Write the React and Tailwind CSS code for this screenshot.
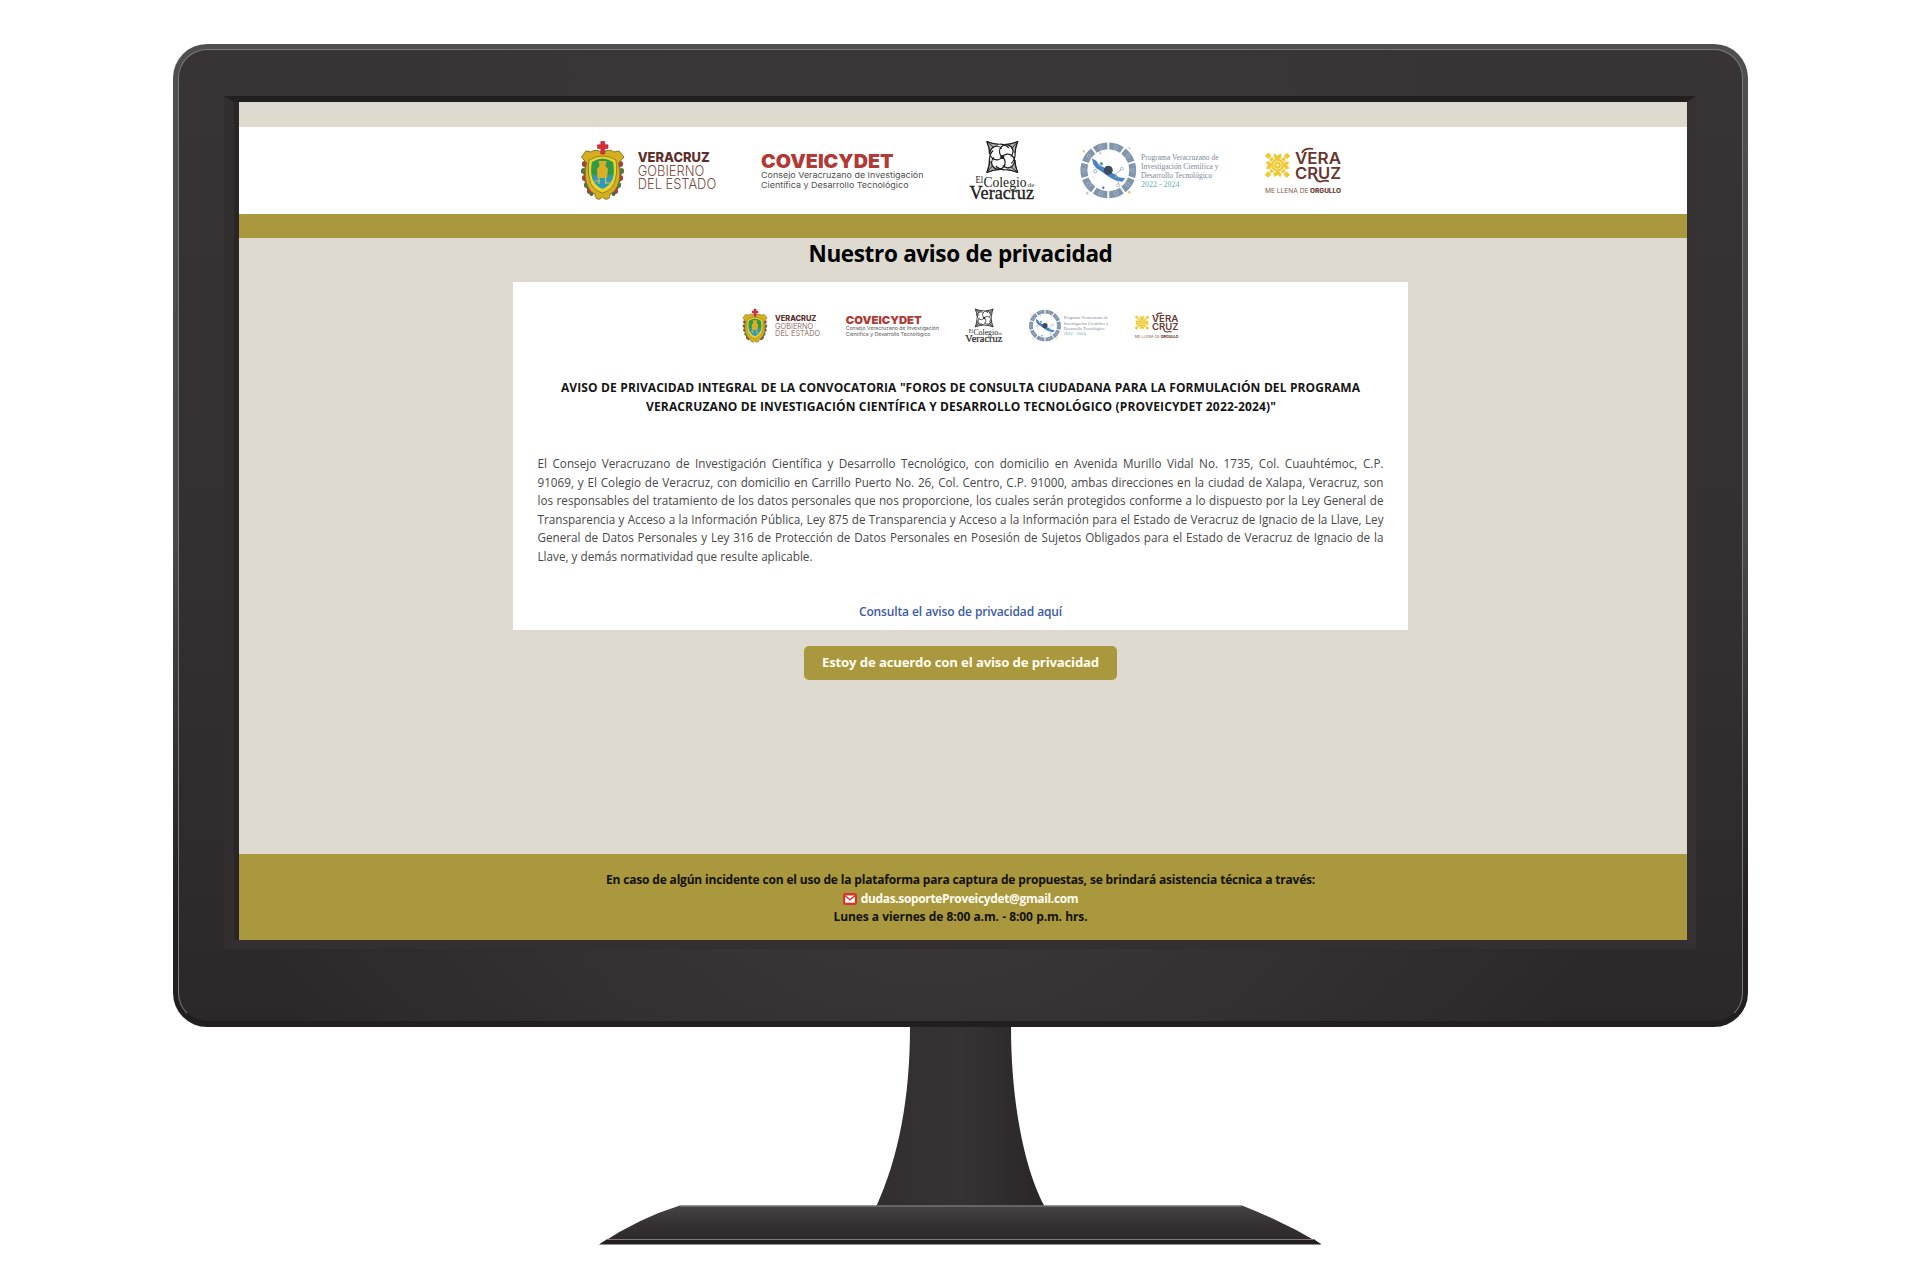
import React from "react";

const SANS = "'Open Sans', 'Noto Sans', sans-serif";
const MONT = "Inter, 'Open Sans', sans-serif";
const SERIF = "'Liberation Serif', serif";

function T({ x, y, w, size, fill, weight = 400, family = MONT, children }) {
  return (
    <text x={x} y={y} textLength={w} lengthAdjust="spacingAndGlyphs" fontSize={size} fill={fill} fontWeight={weight} fontFamily={family}>
      {children}
    </text>
  );
}

function Crest() {
  return (
    <g>
      {[[3, 24], [2, 31], [3, 38], [5, 45], [8, 51]].map(([x, y], i) => (
        <g key={i}>
          <ellipse cx={x + 1.5} cy={y} rx="2.6" ry="3" fill={i % 2 ? "#4d7a45" : "#a8403f"} />
          <ellipse cx={x + 3.5} cy={y + 3} rx="2" ry="2" fill="#3f6b44" />
          <ellipse cx={43.5 - x} cy={y} rx="2.6" ry="3" fill={i % 2 ? "#4d7a45" : "#a8403f"} />
          <ellipse cx={41.5 - x} cy={y + 3} rx="2" ry="2" fill="#3f6b44" />
        </g>
      ))}
      <path
        d="M1.5 17 L6 11 L11 12 Q16 8 22.5 13 Q29 8 34 12 L39 11 L44 17 L38.500 23 Q42 37 37 47 Q34 53 30 54 Q30 60 25 59 L22.500 57 L20 59 Q15 60 15 54 Q11 53 8 47 Q3 37 6.500 23 Z"
        fill="#d5ae22" stroke="#8b741c" strokeWidth="1"
      />
      <path d="M9 20 Q22.500 12 36 20 Q38 34 34 44 Q30 51 22.500 53 Q15 51 11 44 Q7 34 9 20Z" fill="#ecd22e" stroke="#7f731d" strokeWidth=".8" />
      <path d="M12 22 Q22.500 15 33 22 Q35 31 32.500 39 H12.500 Q10 31 12 22Z" fill="#2f9a48" />
      <path d="M11.800 35 H33.200 Q32 45 22.500 49 Q13 45 11.800 35Z" fill="#2b9bbd" />
      <path d="M18.500 21 H26.500 L25.500 26 L28 29 L27 38 H17.500 L17 29 L19.500 26Z" fill="#dcae25" />
      <path d="M19 38 V44 M25.500 38 V44 M15 41 H20 M25 43 H30" stroke="#d9c046" strokeWidth="1.200" />
      <path d="M20.800 1.500 H24.800 V4.800 H28 V8.500 H24.800 V14 H20.800 V8.500 H17.500 V4.800 H20.800Z" fill="#dc2b3b" stroke="#a32333" strokeWidth=".6" />
    </g>
  );
}

function ColegioEmblem() {
  return (
    <g transform="translate(422.300 17)" fill="none" stroke="#1d1d1d" strokeWidth="1.200">
      {[0, 90, 180, 270].map((a) => (
        <g key={a} transform={`rotate(${a})`}>
          <path d="M0 0 A6.800 6.800 0 1 1 -0.500 -8.500" />
          <path d="M-15.500 -15.500 Q-9 -12.500 -1.500 -12.800 Q4 -12 6.500 -9" />
          <path d="M-15.500 -15.500 Q-12.500 -9 -12.800 -3" />
          <path d="M-15.500 -15.500 L-4 -12.200 L-9.500 -9.500 L-12.300 -5Z" fill="#1d1d1d" fillOpacity=".35" strokeWidth=".5" />
          <path d="M-15.500 -15.500 L-8.500 -9.500" strokeWidth=".9" />
        </g>
      ))}
      <circle r="1.500" fill="#1d1d1d" />
    </g>
  );
}

function Gear() {
  return (
    <g transform="translate(528.300 30.300)">
      {[18, 54, 90, 126, 162, 198, 234, 270, 306, 342].map((a) => (
        <g key={a} transform={`rotate(${a})`}>
          <path d="M-7.600 -26.800 Q0 -29 7.600 -26.800 L5.700 -20.200 Q0 -21.800 -5.700 -20.200Z" fill="#8195ad" />
          <circle cx="0" cy="-24.200" r="1.800" fill="none" stroke="#a9b8c9" strokeWidth=".8" />
        </g>
      ))}
      <path d="M-16.500 -12 L-12 -9.500 L-9 -5 L-4.500 -3 L1 2 L7 4 L10 7 L17 8 L14 11.500 L8 10.500 L2 7.500 L-3 4 L-8 .500 L-12 -2 L-15 -6Z" fill="#4c82c3" />
      <path d="M7 4 L13 -1 M-13 -1 V2 M10 8 V14" stroke="#8fa0b3" strokeWidth=".7" />
      <circle cx="13.500" cy="-1.500" r="1.500" fill="#fff" stroke="#8fa0b3" strokeWidth=".7" />
      <circle cx="-13" cy="1" r="1.600" fill="#fff" stroke="#7b93bd" strokeWidth=".7" />
      <circle cx="10" cy="15" r="1.500" fill="#fff" stroke="#8fa0b3" strokeWidth=".7" />
      <circle cx="-7" cy="-6.500" r="1.800" fill="#55a997" />
      <circle cx="7.500" cy="6.500" r="1.600" fill="#55a997" />
      <circle cx="0" cy="0" r="4.500" fill="#3b4a5c" />
      <circle cx="-24.500" cy="-19" r="1.200" fill="#efc75a" />
      <circle cx="21" cy="22" r="1.400" fill="#efc75a" />
      <circle cx="21" cy="-22" r="1" fill="#b7c8dd" />
      <circle cx="-21" cy="23" r="1.300" fill="#b7c8dd" />
      <circle cx="-5" cy="17.500" r="1.200" fill="#6b67dc" />
      <circle cx="-8" cy="-17" r="1" fill="#9db9df" />
      <circle cx="-15" cy="7" r=".800" fill="#e6cf91" />
    </g>
  );
}

function Sun() {
  return (
    <g transform="translate(697.500 25.200)">
      {[0, 90, 180, 270].map((a) => (
        <g key={a} transform={`rotate(${a})`} fill="#efc832">
          <path d="M-12.500 -9.500 L-9.300 -12.800 L-6 -9.500 L-9.300 -6.200Z" />
          <path d="M-3.200 -12 L0 -9.500 L3.200 -12 L4 -8 L0 -5.500 L-4 -8Z" />
          <path d="M-8 -8 L-3 -7 L-7 -3Z" />
        </g>
      ))}
      <circle r="6.600" fill="#efc832" />
      <circle r="4" fill="none" stroke="#fbedb0" strokeWidth="1" />
      <circle r="1.300" fill="#fbedb0" />
    </g>
  );
}

function LogoStrip({ className }) {
  const brown = "#67372f";
  return (
    <svg viewBox="0 0 762 62" className={className}>
      <Crest />
      <T x={57.700} y={22} w={72} size={13.500} weight={800} fill="#5d2f2a">VERACRUZ</T>
      <T x={57.700} y={35.800} w={66.500} size={14} weight={300} fill="#7a4b43">GOBIERNO</T>
      <T x={57.700} y={49} w={78.500} size={14} weight={300} fill="#7a4b43">DEL ESTADO</T>
      <T x={181} y={27.700} w={132.500} size={19} weight={900} fill="#b03a35">COVEICYDET</T>
      <T x={181} y={38} w={162.500} size={8.200} fill="#505050">Consejo Veracruzano de Investigación</T>
      <T x={181} y={47.700} w={147.500} size={8.200} fill="#505050">Científica y Desarrollo Tecnológico</T>
      <ColegioEmblem />
      <T x={395.500} y={43} w={7.500} size={10} family={SERIF} fill="#222">El</T>
      <T x={403.500} y={46.800} w={43} size={14} family={SERIF} fill="#222">Colegio</T>
      <T x={447.500} y={46.500} w={7} size={6} family={SERIF} fill="#444">de</T>
      <g stroke="#222" strokeWidth=".35">
        <T x={389.500} y={59.200} w={64.500} size={18} family={SERIF} fill="#222">Veracruz</T>
      </g>
      <Gear />
      <T x={561} y={19.500} w={77.500} size={7.600} family={SERIF} fill="#7e8797">Programa Veracruzano de</T>
      <T x={561} y={28.700} w={77.500} size={7.600} family={SERIF} fill="#7e8797">Investigación Científica y</T>
      <T x={561} y={37.500} w={71} size={7.600} family={SERIF} fill="#7e8797">Desarrollo Tecnológico</T>
      <T x={561} y={46.500} w={38.500} size={7.600} family={SERIF} fill="#5cb0b0">2022 - 2024</T>
      <Sun />
      <T x={715} y={24.300} w={46} size={16.500} weight={600} fill={brown}>VERA</T>
      <T x={715} y={38.700} w={46} size={16.500} weight={600} fill={brown}>CRUZ</T>
      <path d="M722 13 Q724 7.500 733 8.800 M735.500 38 Q738 43 743 41 Q746 40 749 41.500" fill="none" stroke={brown} strokeWidth="1.800" />
      <T x={685} y={52.600} w={43.500} size={5.800} fill="#82564d">ME LLENA DE</T>
      <T x={730} y={52.600} w={31} size={5.800} weight={800} fill={brown}>ORGULLO</T>
    </svg>
  );
}

const BODY = [
  "El Consejo Veracruzano de Investigación Científica y Desarrollo Tecnológico, con domicilio en Avenida Murillo Vidal No. 1735, Col. Cuauhtémoc, C.P.",
  "91069, y El Colegio de Veracruz, con domicilio en Carrillo Puerto No. 26, Col. Centro, C.P. 91000, ambas direcciones en la ciudad de Xalapa, Veracruz, son",
  "los responsables del tratamiento de los datos personales que nos proporcione, los cuales serán protegidos conforme a lo dispuesto por la Ley General de",
  "Transparencia y Acceso a la Información Pública, Ley 875 de Transparencia y Acceso a la Información para el Estado de Veracruz de Ignacio de la Llave, Ley",
  "General de Datos Personales y Ley 316 de Protección de Datos Personales en Posesión de Sujetos Obligados para el Estado de Veracruz de Ignacio de la",
];

function Screen() {
  return (
    <div className="flex h-full w-full flex-col items-center bg-[#dedad0] text-black" style={{ fontFamily: SANS }}>
      <div className="h-[25px] w-full shrink-0" />
      <header className="flex h-[87px] w-full shrink-0 justify-center bg-white pr-[5px] pt-[13px]">
        <LogoStrip className="h-[62px] w-[762px]" />
      </header>
      <div className="h-6 w-full shrink-0 bg-[#a9983e]" />
      <h1 className="mr-[5px] mt-[1px] h-[30px] w-[304px] whitespace-nowrap text-[22.500px] font-bold leading-[30px] tracking-[-0.36px] [text-align-last:justify]">
        Nuestro aviso de privacidad
      </h1>
      <main className="mr-[5px] mt-[13px] flex h-[348px] w-[895px] shrink-0 flex-col items-center bg-white pt-[26px]">
        <LogoStrip className="h-[36px] w-[437px]" />
        <h2 className="mt-[34px] flex flex-col items-center whitespace-nowrap text-[12px] font-bold leading-[19px] text-[#151515]">
          <span className="w-[799px] tracking-[0.060px] [text-align-last:justify]">AVISO DE PRIVACIDAD INTEGRAL DE LA CONVOCATORIA "FOROS DE CONSULTA CIUDADANA PARA LA FORMULACIÓN DEL PROGRAMA</span>
          <span className="w-[629px] tracking-[0.150px] [text-align-last:justify]">VERACRUZANO DE INVESTIGACIÓN CIENTÍFICA Y DESARROLLO TECNOLÓGICO (PROVEICYDET 2022-2024)"</span>
        </h2>
        <p className="mt-[38px] flex w-[846px] flex-col whitespace-nowrap text-[11.700px] leading-[18.600px] text-[#484848]">
          {BODY.map((line) => (
            <span key={line} className="[text-align-last:justify]">{line}</span>
          ))}
          <span className="w-[275px] [text-align-last:justify]">Llave, y demás normatividad que resulte aplicable.</span>
        </p>
        <a className="mt-[36px] w-[203px] whitespace-nowrap text-[12px] font-semibold leading-[19px] tracking-[-0.160px] text-[#3d5aa9] [text-align-last:justify]">
          Consulta el aviso de privacidad aquí
        </a>
      </main>
      <button className="mr-[5px] mt-[16px] h-[34px] w-[313px] shrink-0 whitespace-nowrap rounded-[5px] bg-[#a9983e] px-[18px] text-[13.200px] font-bold tracking-[-0.200px] text-[#fffdf0] [text-align-last:justify]">
        Estoy de acuerdo con el aviso de privacidad
      </button>
      <footer className="mt-auto flex h-[86px] w-full shrink-0 flex-col items-center whitespace-nowrap bg-[#a9983e] pr-[5px] pt-[17px] text-[12px] font-bold leading-[18.700px] text-[#14120a]">
        <span className="w-[709px] tracking-[-0.210px] [text-align-last:justify]">En caso de algún incidente con el uso de la plataforma para captura de propuestas, se brindará asistencia técnica a través:</span>
        <span className="flex items-center gap-1 text-[#fffdf0]">
          <svg viewBox="0 0 14 12" className="h-3 w-3.5">
            <rect width="14" height="12" rx="2.500" fill="#d5342c" />
            <rect x="2.200" y="2.500" width="9.600" height="7.200" fill="#fff" />
            <path d="M2.200 2.800 L7 6.800 L11.800 2.800" fill="none" stroke="#d5342c" strokeWidth="1.400" />
          </svg>
          <span className="tracking-[-0.350px]">dudas.soporteProveicydet@gmail.com</span>
        </span>
        <span className="w-[254px] tracking-[-0.120px] [text-align-last:justify]">Lunes a viernes de 8:00 a.m. - 8:00 p.m. hrs.</span>
      </footer>
    </div>
  );
}

export default function App() {
  return (
    <div className="flex h-[1281px] w-[1921px] flex-col items-center overflow-hidden bg-white pt-[44px]">
      <div className="h-[983px] w-[1575px] shrink-0 rounded-[34px] bg-[linear-gradient(to_bottom,#4f4f4f,#4a4849_50%,#231f20_90%)] p-[5px]">
        <div className="h-full w-full rounded-[29px] border border-[#7b797a] border-b-[#231f20] bg-[radial-gradient(ellipse_45%_90%_at_48%_60%,#403c3d,transparent),linear-gradient(to_bottom,#383334,#332f30_60%,#2b2829)] pl-[45px] pt-[46px]">
          <div className="h-[853px] w-[1472px] border-b-[9px] border-l-[10px] border-r-[9px] border-t-[6px] border-b-[#343031] border-l-[#322e2f] border-r-[#353132] border-t-[#231f20]">
            <div className="h-full w-full border-l-[5px] border-l-[#2a2627]">
              <Screen />
            </div>
          </div>
        </div>
      </div>
      <svg viewBox="0 0 724 218" className="h-[218px] w-[724px] shrink-0">
        <defs>
          <linearGradient id="neck" x1="0" x2="1" y1="0" y2="0">
            <stop offset="0" stopColor="#322e2f" />
            <stop offset=".5" stopColor="#373334" />
            <stop offset="1" stopColor="#2a2627" />
          </linearGradient>
          <linearGradient id="base" x1="0" x2="0" y1="0" y2="1">
            <stop offset="0" stopColor="#464344" />
            <stop offset=".5" stopColor="#353132" />
            <stop offset="1" stopColor="#2b2728" />
          </linearGradient>
        </defs>
        <path d="M311 0 H412 C412 70 424 140 446 180 H277 C300 130 311 70 311 0Z" fill="url(#neck)" />
        <path d="M81 178.500 H643 Q685 195 722 217 H1 Q40 191 81 178.500Z" fill="url(#base)" />
        <path d="M81 179 H643" stroke="#8c8a8b" />
        <path d="M7 213 H716 L722.500 217.500 H0Z" fill="#231f20" />
        <path d="M7 212.500 H716" stroke="#7d7b7c" />
      </svg>
    </div>
  );
}
